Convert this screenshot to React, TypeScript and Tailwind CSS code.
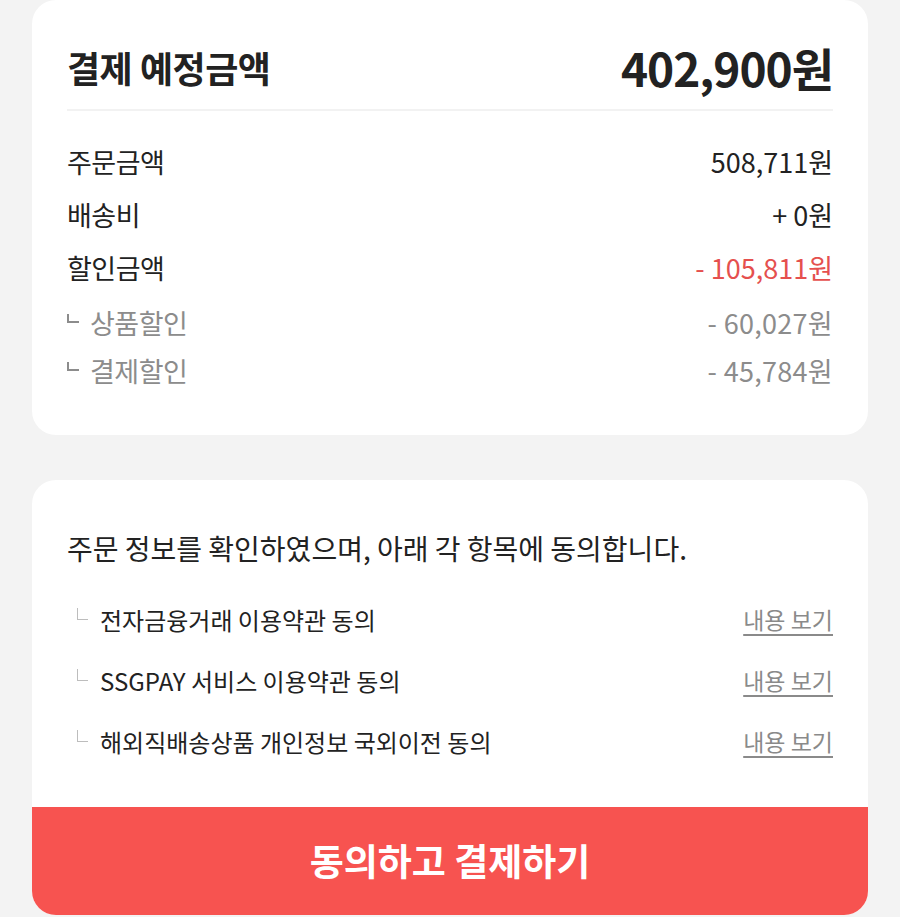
import React from "react";

const font = { fontFamily: '"Noto Sans CJK KR", "Noto Sans", sans-serif' };

function Row({ label, value, red }: { label: string; value: string; red?: boolean }) {
  return (
    <div className="flex h-[53px] items-center justify-between text-[27px] text-[#222]">
      <span className="tracking-[-0.5px]">{label}</span>
      <span className={red ? "text-[#e5504e]" : ""}>{value}</span>
    </div>
  );
}

function SubRow({ label, value }: { label: string; value: string }) {
  return (
    <div className="flex h-[48px] items-center justify-between text-[27px] text-[#8c8c8c]">
      <span className="flex items-center tracking-[-0.5px]">
        <span className="mr-[11px] -mt-[10px] h-[9px] w-[12px] border-b-2 border-l-2 border-[#8c8c8c]" />
        {label}
      </span>
      <span className="tracking-[0.3px]">{value}</span>
    </div>
  );
}

function Term({ label }: { label: string }) {
  return (
    <div className="flex h-[61px] items-center justify-between">
      <span className="flex items-center text-[24px] text-[#222]">
        <span className="ml-[10px] mr-[12px] -mt-[12px] h-[12px] w-[11px] border-b border-l border-[#bdbdbd]" />
        {label}
      </span>
      <span className="text-[23px] text-[#8a8a8a] underline decoration-2 underline-offset-[5px]">내용 보기</span>
    </div>
  );
}

export default function App() {
  return (
    <div className="min-h-[917px] w-[900px] bg-[#f3f3f3]" style={font}>
      <div className="mx-[32px] rounded-[24px] bg-white px-[35px] pb-[40px] pt-[42px]">
        <div className="flex h-[50px] items-center justify-between text-[#222]">
          <span className="text-[36px] font-bold tracking-[-0.5px]">결제 예정금액</span>
          <span className="text-[46px] font-bold tracking-[-1px]">402,900원</span>
        </div>
        <div className="mt-[17px] h-[2px] bg-[#f2f2f2]" />
        <div className="mt-[25px]">
          <Row label="주문금액" value="508,711원" />
          <Row label="배송비" value="+ 0원" />
          <Row label="할인금액" value="- 105,811원" red />
          <div className="mt-[4px]">
            <SubRow label="상품할인" value="- 60,027원" />
            <SubRow label="결제할인" value="- 45,784원" />
          </div>
        </div>
      </div>

      <div className="mx-[32px] mt-[45px] overflow-hidden rounded-[24px] bg-white">
        <div className="px-[35px] pb-[35px] pt-[48px]">
          <div className="flex h-[40px] items-center text-[28px] text-[#222]">
            주문 정보를 확인하였으며, 아래 각 항목에 동의합니다.
          </div>
          <div className="mt-[21px]">
            <Term label="전자금융거래 이용약관 동의" />
            <Term label="SSGPAY 서비스 이용약관 동의" />
            <Term label="해외직배송상품 개인정보 국외이전 동의" />
          </div>
        </div>
        <button className="flex h-[108px] w-full items-center justify-center bg-[#f75350] text-[37px] font-bold text-white">
          동의하고 결제하기
        </button>
      </div>
    </div>
  );
}
